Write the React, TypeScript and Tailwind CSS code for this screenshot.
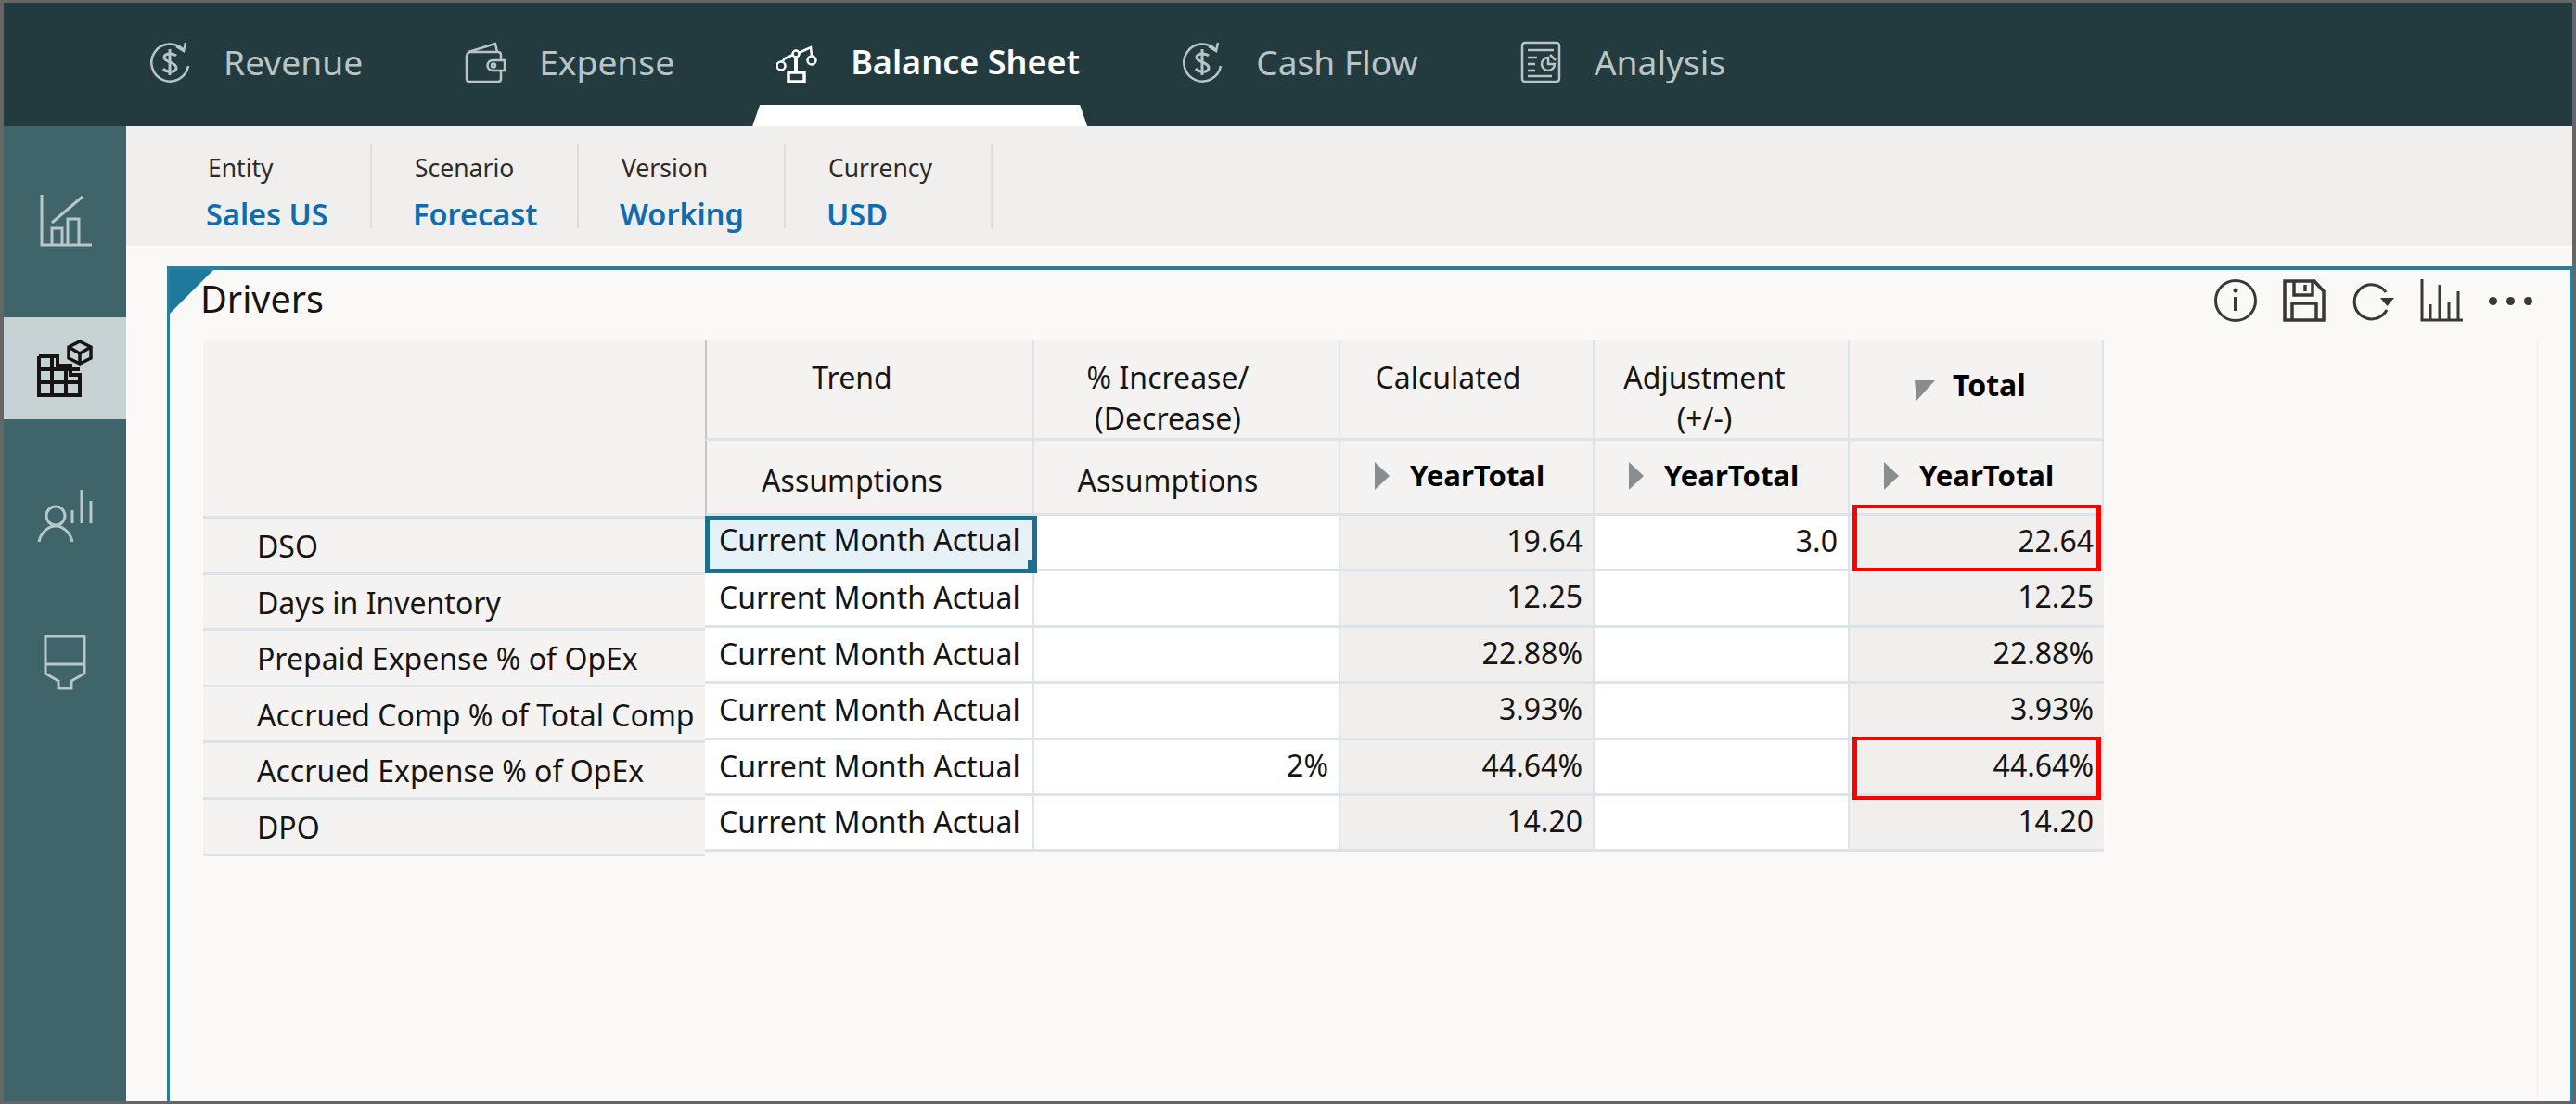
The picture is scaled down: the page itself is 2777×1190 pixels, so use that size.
const tabs = [
  { label: "Revenue", icon: "dollar" },
  { label: "Expense", icon: "wallet" },
  { label: "Balance Sheet", icon: "scale", active: true },
  { label: "Cash Flow", icon: "dollar" },
  { label: "Analysis", icon: "report" },
]

const filters = [
  { label: "Entity", value: "Sales US" },
  { label: "Scenario", value: "Forecast" },
  { label: "Version", value: "Working" },
  { label: "Currency", value: "USD" },
]

const labels = [
  "DSO",
  "Days in Inventory",
  "Prepaid Expense % of OpEx",
  "Accrued Comp % of Total Comp",
  "Accrued Expense % of OpEx",
  "DPO",
]

const rows = [
  { inc: "", calc: "19.64", adj: "3.0", total: "22.64", box: "-top-[12px] -bottom-[3px] left-[3px] right-[3px]" },
  { inc: "", calc: "12.25", adj: "", total: "12.25" },
  { inc: "", calc: "22.88%", adj: "", total: "22.88%" },
  { inc: "", calc: "3.93%", adj: "", total: "3.93%" },
  { inc: "2%", calc: "44.64%", adj: "", total: "44.64%", box: "-top-[4px] -bottom-[7px] left-[3px] right-[3px]" },
  { inc: "", calc: "14.20", adj: "", total: "14.20" },
]

function TabIcon({ name }: { name: string }) {
  if (name === "dollar") {
    return (
      <svg viewBox="0 0 44 46" className="h-[46px] w-[44px]" fill="none" stroke="currentColor" strokeWidth="2.5">
        <path d="M37 10A20 20 0 1 0 42 27" />
        <path d="M29 6l8 5 2-9" />
        <path d="M29 16c-3-3-13-3-13 2s13 5 13 11-11 5-14 1" strokeWidth="3" />
        <path d="M22 9v28" strokeWidth="3" />
      </svg>
    )
  }
  if (name === "wallet") {
    return (
      <svg viewBox="0 0 44 46" className="h-[46px] w-[44px]" fill="none" stroke="currentColor" strokeWidth="2.5">
        <path d="M2 16v25q0 3 3 3h31q3 0 3-3V32M39 20v-5q0-3-3-3H6q-4 1-4 5" />
        <path d="M4 12L33 3l2 9" />
        <path d="M43 21H30a5 5 0 0 0 0 11h13z" />
        <circle cx="31" cy="26.5" r="2" />
      </svg>
    )
  }
  if (name === "scale") {
    return (
      <svg viewBox="0 0 44 46" className="h-[46px] w-[44px]" fill="none" stroke="currentColor" strokeWidth="2.5">
        <circle cx="21" cy="14" r="3.5" />
        <path d="M21 18v16" strokeWidth="4" />
        <path d="M18 15l-9 4-3 4M24 13l13-6 1 9" />
        <circle cx="5" cy="27" r="4.5" />
        <circle cx="38" cy="21" r="4.5" />
        <rect x="13" y="34" width="17" height="10" strokeWidth="3.5" />
      </svg>
    )
  }
  return (
    <svg viewBox="0 0 44 46" className="h-[46px] w-[44px]" fill="none" stroke="currentColor" strokeWidth="2.5">
      <rect x="2" y="2" width="40" height="42" rx="3" />
      <path d="M8 10h28M8 18h10M8 25h8M8 32h8M8 38h26" />
      <path d="M30 18a7 7 0 1 0 7 7h-7z" />
      <path d="M32 15l6 6" />
    </svg>
  )
}

function HeaderCell({ children, className = "" }: { children: React.ReactNode; className?: string }) {
  return <div className={`border-r-2 border-b-[3px] border-[#dde3e9] bg-[#f4f3f1] ${className}`}>{children}</div>
}

function YearTotal() {
  return (
    <HeaderCell className="flex items-start pt-[22px] pl-[37px]">
      <svg viewBox="0 0 16 30" className="mt-[1px] h-[30px] w-[16px]">
        <polygon points="0,0 16,15 0,30" fill="#8a8d8f" />
      </svg>
      <span className="-mt-[7px] ml-[22px] text-[31px] leading-[44px] font-bold text-black">YearTotal</span>
    </HeaderCell>
  )
}

function RedBox({ className }: { className: string }) {
  return <div className={`pointer-events-none absolute z-10 border-x-[5px] border-y-[4px] border-[#fd0000] ${className}`} />
}

export default function App() {
  return (
    <div className="flex h-[1190px] w-[2777px] flex-col overflow-hidden border-x-[4px] border-y-[3px] border-[#666666] bg-[#fbf9f8] font-['Noto_Sans',sans-serif] text-[#161513]">
      {/* top tabs */}
      <div className="flex h-[133px] shrink-0 items-start gap-[110px] bg-[#233a3f] pt-[39px] pl-[157px]">
        {tabs.map((t) => (
          <div key={t.label} className={`relative flex items-center gap-[36px] ${t.active ? "text-white" : "text-[#b9c4c4]"}`}>
            <TabIcon name={t.icon} />
            <span className={t.active ? "text-[36px] leading-[50px] font-semibold" : "text-[37.2px] leading-[50px]"}>{t.label}</span>
            {t.active && (
              <div className="absolute top-[71px] -right-[8px] -left-[26px] h-[23px] bg-white [clip-path:polygon(8px_0,calc(100%-8px)_0,100%_100%,0_100%)]" />
            )}
          </div>
        ))}
      </div>

      <div className="flex min-h-0 flex-1">
        {/* side nav */}
        <div className="flex w-[132px] shrink-0 flex-col bg-[#3f6469] text-[#b8c7c9]">
          <div className="h-[206px] pt-[74px] pl-[39px]">
            <svg viewBox="0 0 56 56" className="h-[56px] w-[56px]" fill="none" stroke="currentColor" strokeWidth="3">
              <path d="M2 0v54h54" />
              <path d="M13 30L46 2" />
              <path d="M13 54V36h11v18M30 54V26h12v28" />
            </svg>
          </div>
          <div className="flex h-[110px] items-center bg-[#c6d2d4] pl-[36px] text-[#161513]">
            <svg viewBox="0 0 62 62" className="h-[62px] w-[62px]" fill="none" stroke="currentColor" strokeWidth="4">
              <path d="M2 18h20v10h14v10h12M2 18v42h44V38" />
              <path d="M2 32h44M2 46h44M16 18v42M31 28v32" />
              <path d="M46 2l12 6v12l-12 6-12-6V8zM34 8l12 7 12-7M46 15v11" strokeWidth="3.5" />
            </svg>
          </div>
          <div className="flex flex-col items-start gap-[100px] pt-[76px] pl-[36px]">
            <svg viewBox="0 0 60 56" className="h-[56px] w-[60px]" fill="none" stroke="currentColor" strokeWidth="3">
              <circle cx="20" cy="28" r="10" />
              <path d="M2 56c2-10 10-17 18-17s16 7 18 17" />
              <path d="M38 36V22M48 36V0M58 36V12" />
            </svg>
            <svg viewBox="0 0 46 60" className="ml-[7px] h-[60px] w-[46px]" fill="none" stroke="currentColor" strokeWidth="3">
              <path d="M2 2h42v30H2zM2 32v10l14 8v8h14v-8l14-8V32" />
            </svg>
          </div>
        </div>

        <div className="flex min-w-0 flex-1 flex-col">
          {/* filters */}
          <div className="flex h-[129px] shrink-0 items-center gap-[44px] bg-[#f0efed] pl-[86px]">
            {filters.map((f) => (
              <div key={f.label} className="flex h-[91px] w-[179px] flex-col border-r-2 border-[#e0dedb] pt-[12px]">
                <span className="pl-[2px] text-[26.5px] leading-[28px] text-[#2d2a28]">{f.label}</span>
                <span className="mt-[16px] text-[32.5px] leading-[40px] font-semibold text-[#0f6cae]">{f.value}</span>
              </div>
            ))}
          </div>

          {/* drivers panel */}
          <div className="flex min-h-0 flex-1 pt-[22px] pl-[44px]">
            <div className="relative flex-1 border-t-[4px] border-r-[3px] border-l-[3px] border-[#2a7f9f]">
              <div className="absolute top-0 left-0 h-[47px] w-[47px] bg-[#1d7a9c] [clip-path:polygon(0_0,100%_0,0_100%)]" />
              <div className="absolute top-[74px] right-[33px] bottom-0 w-[3px] bg-[#f5f5f3]" />
              <div className="flex items-start justify-between pt-[5px] pl-[33px]">
                <div className="text-[39.5px] leading-[52px]">Drivers</div>
                <div className="mr-[40px] flex items-center gap-[28px] pt-[5px] text-[#3a3836]">
                  <svg viewBox="0 0 46 46" className="h-[46px] w-[46px]" fill="none" stroke="currentColor" strokeWidth="3">
                    <circle cx="23" cy="23" r="21.5" />
                    <path d="M23 19v15" strokeWidth="4" />
                    <circle cx="23" cy="12" r="2.5" fill="currentColor" stroke="none" />
                  </svg>
                  <svg viewBox="0 0 46 46" className="h-[46px] w-[46px]" fill="none" stroke="currentColor" strokeWidth="3.5">
                    <path d="M2 2h32l10 11v31H2z" />
                    <path d="M12 2v15h20V2M24 6v7M10 44V26h26v18" />
                  </svg>
                  <svg viewBox="0 0 46 46" className="h-[46px] w-[46px]" fill="none" stroke="currentColor" strokeWidth="3">
                    <path d="M37 14A18.5 18.5 0 1 0 38 33" />
                    <polygon points="31,20 46,20 38.5,29" fill="currentColor" stroke="none" />
                  </svg>
                  <svg viewBox="0 0 46 46" className="h-[46px] w-[46px]" fill="none" stroke="currentColor" strokeWidth="3">
                    <path d="M2 0v44h44" />
                    <path d="M11 44V27M21 44V6M31 44V24M41 44V13" />
                  </svg>
                  <div className="flex h-[46px] w-[47px] items-center justify-between">
                    <div className="h-[9px] w-[9px] rounded-full bg-[#3a3836]" />
                    <div className="h-[9px] w-[9px] rounded-full bg-[#3a3836]" />
                    <div className="h-[9px] w-[9px] rounded-full bg-[#3a3836]" />
                  </div>
                </div>
              </div>

              {/* table */}
              <div className="absolute top-[76px] left-[36px] flex text-[32px]">
                <div className="w-[541px]">
                  <div className="h-[189px] bg-[#f4f3f1]" />
                  {labels.map((l) => (
                    <div key={l} className="h-[60.6px] border-t-[3px] border-[#dde3e9] bg-[#f4f3f1] pt-[10px] pl-[58px] leading-[40px] whitespace-nowrap">
                      {l}
                    </div>
                  ))}
                  <div className="h-[3px] bg-[#dde3e9]" />
                </div>
                <div className="grid grid-cols-[355px_330px_274px_275px_274px] grid-rows-[108px_81px_repeat(6,60.4px)]">
                  <HeaderCell className="border-l-2 border-l-[#c4c4c4] pt-[18px] pr-[38px] text-center leading-[44px]">Trend</HeaderCell>
                  <HeaderCell className="pt-[18px] pr-[40px] text-center leading-[44px]">% Increase/<br />(Decrease)</HeaderCell>
                  <HeaderCell className="pt-[18px] pr-[40px] text-center leading-[44px]">Calculated</HeaderCell>
                  <HeaderCell className="pt-[18px] pr-[36px] text-center leading-[44px]">Adjustment<br />(+/-)</HeaderCell>
                  <HeaderCell className="flex items-start pt-[26px] pl-[70px]">
                    <svg viewBox="0 0 22 22" className="mt-[17px] h-[22px] w-[22px]">
                      <polygon points="0,0 22,0 2,22" fill="#8a8d8f" />
                    </svg>
                    <span className="ml-[19px] leading-[44px] font-bold text-black">Total</span>
                  </HeaderCell>

                  <HeaderCell className="border-l-2 border-l-[#c4c4c4] pt-[21px] pr-[38px] text-center leading-[44px]">Assumptions</HeaderCell>
                  <HeaderCell className="pt-[21px] pr-[40px] text-center leading-[44px]">Assumptions</HeaderCell>
                  <YearTotal />
                  <YearTotal />
                  <YearTotal />

                  {rows.map((r, i) => (
                    <div key={i} className="contents">
                      <div
                        className={
                          i === 0
                            ? "relative z-10 -mr-[3px] -mb-[2px] border-[5px] border-[#1b6f8f] bg-[#e5f1f7] pt-[1px] pl-[10px] leading-[40px] whitespace-nowrap"
                            : "border-r-2 border-b-[3px] border-[#dde3e9] bg-white pt-[8px] pl-[15px] leading-[40px] whitespace-nowrap"
                        }
                      >
                        Current Month Actual
                        {i === 0 && <div className="absolute -right-[5px] -bottom-[5px] h-[14px] w-[10px] bg-[#1b6f8f]" />}
                      </div>
                      <div className="border-r-2 border-b-[3px] border-[#dde3e9] bg-white pt-[7px] pr-[11px] text-right leading-[40px]">{r.inc}</div>
                      <div className="border-r-2 border-b-[3px] border-[#dde3e9] bg-[#f1efed] pt-[7px] pr-[11px] text-right leading-[40px]">{r.calc}</div>
                      <div className="border-r-2 border-b-[3px] border-[#dde3e9] bg-white pt-[7px] pr-[11px] text-right leading-[40px]">{r.adj}</div>
                      <div className="relative border-b-[3px] border-[#dde3e9] bg-[#f1efed] pt-[7px] pr-[11px] text-right leading-[40px]">
                        {r.total}
                        {r.box && <RedBox className={r.box} />}
                      </div>
                    </div>
                  ))}
                </div>
              </div>
            </div>
          </div>
        </div>
      </div>
    </div>
  )
}
